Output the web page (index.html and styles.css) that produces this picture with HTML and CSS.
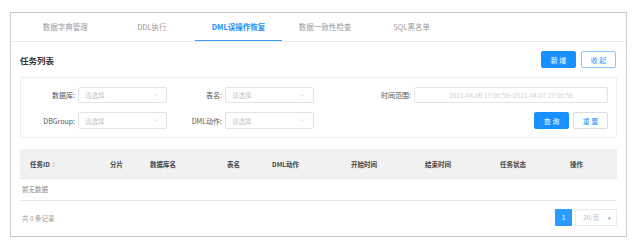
FILE: index.html
```html
<!DOCTYPE html>
<html lang="zh-CN">
  <head>
    <meta charset="UTF-8" />
    <meta name="viewport" content="width=device-width, initial-scale=1.0" />
    <title>DML误操作恢复</title>
    <link rel="stylesheet" href="styles.css">
  </head>
  <body>
    <div class="frame">
      <nav class="tabs">
        <span class="tab">数据字典管理</span>
        <span class="tab">DDL执行</span>
        <span class="tab active">DML误操作恢复</span>
        <span class="tab">数据一致性检查</span>
        <span class="tab">SQL黑名单</span>
      </nav>

      <div class="content">
        <div class="title-row">
          <h2>任务列表</h2>
          <div class="actions">
            <button class="btn primary">新 增</button>
            <button class="btn outline">收 起</button>
          </div>
        </div>

        <form class="filter">
          <label>数据库:</label>
          <div class="select"><span>请选择</span><svg viewBox="0 0 8 5"><path d="M0.5 0.5 L4 4 L7.5 0.5" /></svg></div>
          <label>表名:</label>
          <div class="select"><span>请选择</span><svg viewBox="0 0 8 5"><path d="M0.5 0.5 L4 4 L7.5 0.5" /></svg></div>
          <label>时间范围:</label>
          <div class="range">2021-04-06 17:00:58~2021-04-07 17:00:58</div>

          <label>DBGroup:</label>
          <div class="select"><span>请选择</span><svg viewBox="0 0 8 5"><path d="M0.5 0.5 L4 4 L7.5 0.5" /></svg></div>
          <label>DML动作:</label>
          <div class="select"><span>请选择</span><svg viewBox="0 0 8 5"><path d="M0.5 0.5 L4 4 L7.5 0.5" /></svg></div>
          <div class="form-buttons">
            <button type="button" class="btn primary">查 询</button>
            <button type="button" class="btn plain">重 置</button>
          </div>
        </form>

        <div class="table">
          <div class="thead">
            <span>任务ID <i class="sort">⇕</i></span>
            <span>分片</span>
            <span>数据库名</span>
            <span>表名</span>
            <span>DML动作</span>
            <span>开始时间</span>
            <span>结束时间</span>
            <span>任务状态</span>
            <span>操作</span>
          </div>
          <div class="empty">暂无数据</div>
        </div>

        <div class="footer">
          <span class="total">共 0 条记录</span>
          <div class="pager">
            <span class="page current">1</span>
            <span class="size">20/页 <i>▾</i></span>
          </div>
        </div>
      </div>
    </div>
  </body>
</html>
```

FILE: styles.css
```css
body {
  margin: 0;
  background-color: #ffffff;
  font-family: "Noto Sans CJK SC", "Noto Sans", sans-serif;
  color: #333;
}

.frame {
  margin: 12px 0 0 10px;
  width: 615px;
  height: 223px;
  border: 1px solid #c9c9c9;
}

.tabs {
  display: flex;
  height: 28px;
  padding-left: 11px;
  border-bottom: 1px solid #ebebeb;
}

.tab {
  width: 86.6px;
  text-align: center;
  font-size: 7.5px;
  line-height: 28px;
  color: #9a9a9a;
  box-sizing: border-box;
}

.tab.active {
  color: #1890ff;
  font-weight: bold;
  border-bottom: 1.5px solid #3b9cff;
}

.content {
  padding: 0 9px 0 9px;
}

.title-row {
  display: flex;
  justify-content: space-between;
  align-items: center;
  height: 34px;
}

h2 {
  margin: 0;
  font-size: 8.5px;
  font-weight: bold;
  color: #333;
  padding-top: 2px;
}

.actions {
  display: flex;
  gap: 5px;
  padding-right: 1px;
  padding-top: 1px;
}

.btn {
  height: 17px;
  width: 35px;
  padding: 0;
  border-radius: 2px;
  font-family: inherit;
  font-size: 7px;
  cursor: pointer;
  box-sizing: border-box;
}

.btn.primary {
  background-color: #1890ff;
  border: 1px solid #1890ff;
  color: #ffffff;
}

.btn.outline {
  background: #ffffff;
  border: 1px solid #8cc4ff;
  color: #1890ff;
}

.btn.plain {
  background: #ffffff;
  border: 1px solid #dcdcdc;
  color: #1890ff;
}

.filter {
  margin-top: 1px;
  border: 1px solid #ececec;
  border-radius: 2px;
  padding: 9px 8px 8px 0;
  display: grid;
  grid-template-columns: 57px 89px 58px 89px 100px 194px;
  grid-template-rows: 16px 17px;
  row-gap: 9px;
  align-items: center;
}

.filter label {
  font-size: 7px;
  color: #555;
  text-align: right;
  padding-right: 3px;
}

.select,
.range {
  height: 100%;
  border: 1px solid #e3e3e3;
  border-radius: 2px;
  box-sizing: border-box;
  display: flex;
  align-items: center;
  font-size: 6.5px;
  color: #c4c4c4;
}

.select {
  justify-content: space-between;
  padding: 0 8px 0 6px;
}

.select svg {
  width: 5px;
  height: 3px;
  fill: none;
  stroke: #c8c8c8;
  stroke-width: 0.9;
}

.range {
  justify-content: center;
  color: #cfcfcf;
}

.form-buttons {
  grid-column: 5 / 7;
  display: flex;
  justify-content: flex-end;
  gap: 4px;
  height: 100%;
}

.table {
  margin-top: 11px;
}

.thead {
  display: grid;
  grid-template-columns: 80px 40px 77px 45px 79px 74px 75px 70px 1fr;
  align-items: center;
  height: 29px;
  padding-left: 10px;
  background-color: #f1f1f1;
  border-bottom: 1px solid #e6e6e6;
  font-size: 6.5px;
  font-weight: bold;
  color: #444;
}

.sort {
  font-style: normal;
  font-weight: normal;
  color: #bbb;
  font-size: 6px;
}

.empty {
  height: 21px;
  line-height: 21px;
  padding-left: 2px;
  font-size: 6.5px;
  color: #888;
  border-bottom: 1px solid #e6e6e6;
}

.footer {
  display: flex;
  justify-content: space-between;
  align-items: center;
  margin-top: 8px;
}

.total {
  padding-left: 2px;
  font-size: 6.5px;
  color: #999;
}

.pager {
  display: flex;
  gap: 3px;
}

.page {
  width: 17px;
  height: 17px;
  line-height: 17px;
  text-align: center;
  font-size: 6.5px;
  color: #ffffff;
  background-color: #2a9cff;
}

.size {
  width: 42px;
  height: 17px;
  line-height: 15px;
  box-sizing: border-box;
  border: 1px solid #ebebeb;
  padding-left: 7px;
  font-size: 6.5px;
  color: #bbb;
  position: relative;
}

.size i {
  position: absolute;
  right: 5px;
  font-style: normal;
  font-size: 5px;
  color: #999;
}
```
